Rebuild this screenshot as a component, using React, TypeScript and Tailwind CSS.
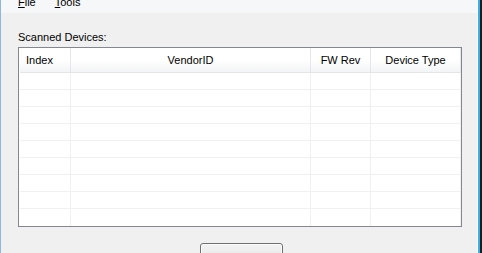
import React from "react";

const columns = [
  { label: "Index", width: "w-[51px]", align: "justify-start pl-[6px]" },
  { label: "VendorID", width: "w-[240px]", align: "justify-center" },
  { label: "FW Rev", width: "w-[60px]", align: "justify-center" },
  { label: "Device Type", width: "w-[90px]", align: "justify-center" },
];

const rows = Array.from({ length: 9 }, (_, i) => i);

export default function App() {
  return (
    <div
      className="flex h-[253px] w-[482px] overflow-hidden bg-[#f0f0f0] text-[11px] leading-[13px] text-black"
      style={{ fontFamily: '"Liberation Sans", Arial, sans-serif' }}
    >
      {/* window frame left */}
      <div className="w-[1px] shrink-0 bg-[#8fb6dc]" />

      <div className="flex min-w-0 flex-1 flex-col">
        {/* menu bar */}
        <div className="h-[13px] shrink-0 overflow-hidden bg-[#f6f7f8]">
          <div className="-mt-[4px] flex pl-[17px]">
            <span>
              <span className="underline">F</span>ile
            </span>
            <span className="ml-[19px]">
              <span className="underline">T</span>ools
            </span>
          </div>
        </div>

        <div className="mt-[18px] pl-[17px]">Scanned Devices:</div>

        {/* list view */}
        <div className="ml-[17px] mt-[3px] flex h-[180px] w-[444px] shrink-0 flex-col border border-[#828790] bg-white pl-[1px]">
          <div className="flex h-[25px] shrink-0 border-b border-[#e5e5e5] bg-linear-to-b from-white via-white to-[#f3f4f6]">
            {columns.map((c) => (
              <div
                key={c.label}
                className={`flex items-center border-r border-[#e3e6ea] ${c.width} ${c.align}`}
              >
                {c.label}
              </div>
            ))}
          </div>
          {rows.map((r) => (
            <div
              key={r}
              className={`flex h-[17px] shrink-0 ${r < 8 ? "border-b border-[#f0f0f0]" : ""}`}
            >
              {columns.map((c) => (
                <div key={c.label} className={`border-r border-[#f0f0f0] ${c.width}`} />
              ))}
            </div>
          ))}
        </div>

        <button className="ml-[199px] mt-[16px] h-[23px] w-[83px] shrink-0 rounded-[3px] border border-[#707070] bg-linear-to-b from-[#f2f2f2] via-[#ebebeb] to-[#cfcfcf] shadow-[inset_0_0_0_1px_#fcfcfc]" />
      </div>

      {/* window frame right */}
      <div className="w-[1px] shrink-0 bg-[#f7f9fb]" />
      <div className="w-[2px] shrink-0 bg-[#3aaee6]" />
      <div className="w-[2px] shrink-0 bg-[#1e1e1e]" />
    </div>
  );
}
